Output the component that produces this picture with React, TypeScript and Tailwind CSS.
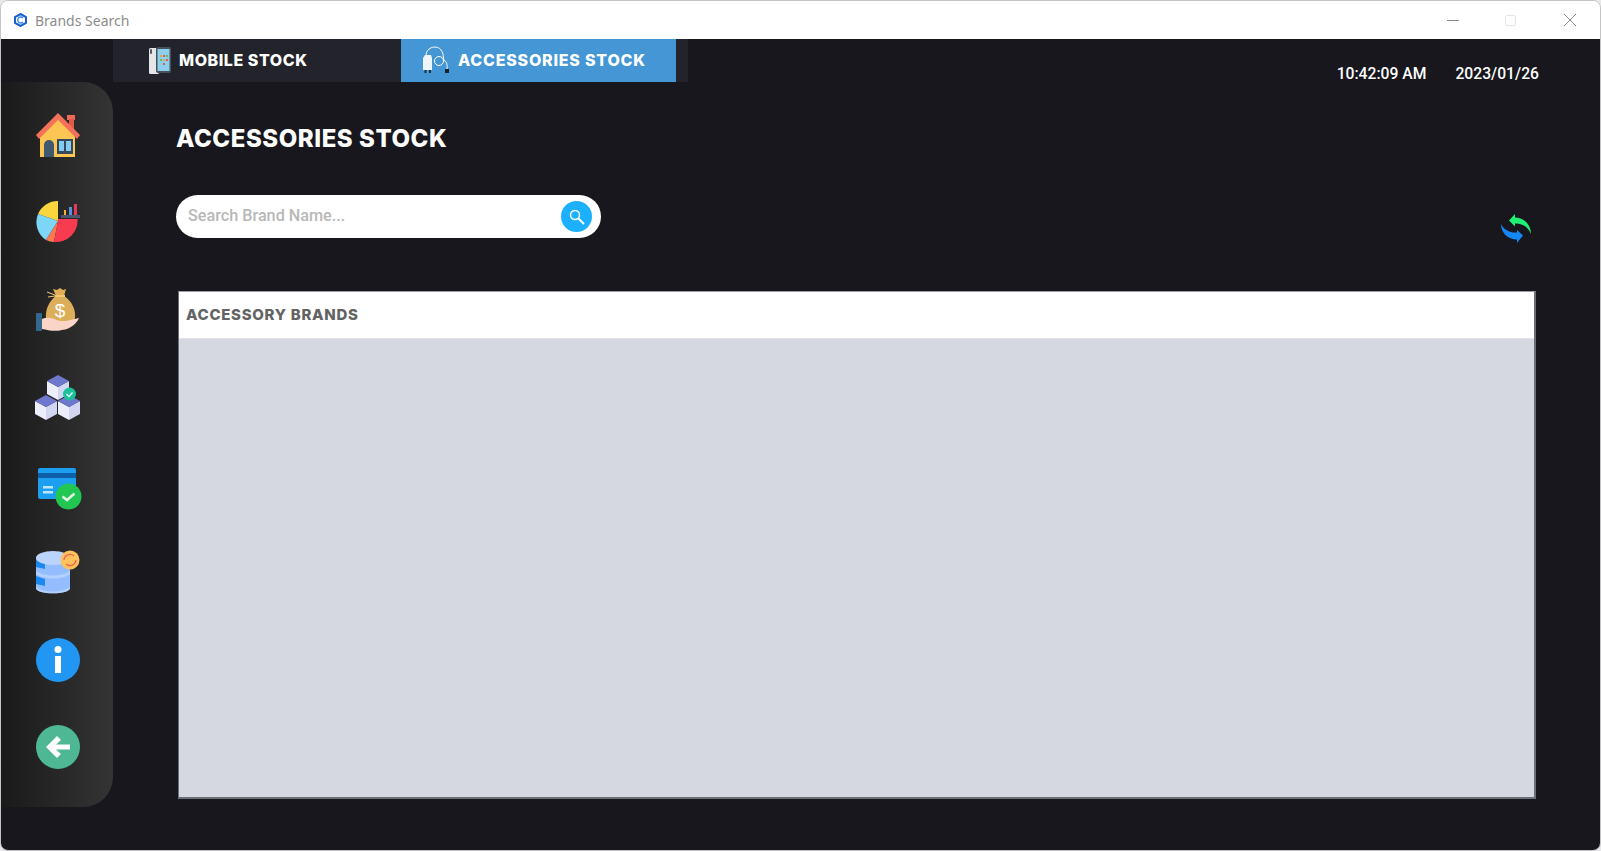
function HomeIcon() {
    return (
        <svg width="44" height="44" viewBox="0 0 44 44">
            <rect x="31" y="2" width="8" height="5" fill="#ee6a55" />
            <rect x="33" y="6" width="5" height="12" fill="#e0594a" />
            <path d="M4 20 L22 5 L39 20 V44 H4 Z" fill="#fdc652" />
            <path d="M0 22 L22 0 L44 22 L41 26 L22 7 L3 26 Z" fill="#f4715a" />
            <path d="M8 44 V32 a5 5 0 0 1 10 0 V44 Z" fill="#41596f" />
            <rect x="21" y="26" width="16" height="15" fill="#36495c" />
            <rect x="23" y="28" width="5" height="10" fill="#82ccf4" />
            <rect x="30" y="28" width="5" height="10" fill="#82ccf4" />
        </svg>
    );
}

function ChartIcon() {
    return (
        <svg width="44" height="44" viewBox="0 0 44 44">
            <path d="M22 1 V21 L2 14 A21.5 21.5 0 0 1 22 1 Z" fill="#fbd53d" />
            <path d="M22 21 L2 14 A21.5 21.5 0 0 0 10 40 Z" fill="#7dd5f8" />
            <path d="M22 21 L10 40 A21.5 21.5 0 0 0 18 42 Z" fill="#f87850" />
            <path d="M22 21 L18 42 A21.5 21.5 0 0 0 41.5 19 H22 Z" fill="#f93b52" />
            <rect x="25" y="15" width="19" height="3" fill="#4c5672" />
            <rect x="28" y="10" width="2" height="5" fill="#f3b435" />
            <rect x="33" y="7" width="3" height="8" fill="#5c8fe0" />
            <rect x="38" y="4" width="3" height="11" fill="#e63a5a" />
        </svg>
    );
}

function MoneyIcon() {
    return (
        <svg width="44" height="44" viewBox="0 0 44 44">
            <path d="M17 1 L21 2 L24 0 L27 2 L30 1 L28 8 H20 Z" fill="#dfae55" />
            <path d="M20 8 H28 C36 13 40 22 39 30 L36 36 H14 L10 30 C9 22 13 13 20 8 Z" fill="#dcae5a" />
            <rect x="19" y="7" width="10" height="2" fill="#f3c874" />
            <path d="M11 4 L19 7 M12 9 L19 8" stroke="#f3c874" strokeWidth="1" />
            <text x="24" y="29" textAnchor="middle" fontSize="19" fill="#fff" fontFamily="'Liberation Sans', sans-serif">$</text>
            <path d="M6 31 C12 28 18 31 24 33 H30 L43 30 C41 35 35 41 26 42 C18 44 12 42 6 41 Z" fill="#fad4c6" />
            <rect x="0" y="25" width="6" height="18" rx="1" fill="#33678c" />
        </svg>
    );
}

function Cube({ x, y }: { x: number; y: number }) {
    return (
        <g transform={`translate(${x} ${y})`}>
            <path d="M0 6 L11 12 V25 L0 19 Z" fill="#eceefb" />
            <path d="M22 6 L11 12 V25 L22 19 Z" fill="#d3d6f3" />
            <path d="M0 6 L11 0 L22 6 L11 12 Z" fill="#6f78cf" />
        </g>
    );
}

function BoxesIcon() {
    return (
        <svg width="45" height="45" viewBox="0 0 45 45">
            <Cube x={12} y={0} />
            <Cube x={0} y={20} />
            <Cube x={23} y={20} />
            <circle cx="34.5" cy="19" r="6.5" fill="#1cc09a" />
            <path d="M31.5 19 L34 21.5 L37.5 17.5" stroke="#e6fff8" strokeWidth="1.4" fill="none" />
        </svg>
    );
}

function CardIcon() {
    return (
        <svg width="44" height="42" viewBox="0 0 44 42">
            <rect x="0" y="0" width="38" height="31" rx="2" fill="#1c9ff0" />
            <rect x="0" y="5" width="38" height="5" fill="#0d5fa8" />
            <rect x="5" y="18" width="10" height="2.5" fill="#bde6fb" />
            <rect x="5" y="23" width="10" height="2.5" fill="#bde6fb" />
            <circle cx="30.5" cy="28.5" r="13" fill="#22c653" />
            <path d="M24.5 28.5 L29 32 L36.5 25.5" stroke="#dff8e6" strokeWidth="2.6" fill="none" />
        </svg>
    );
}

function DbIcon() {
    return (
        <svg width="44" height="44" viewBox="0 0 44 44">
            <path d="M0 7 H34 V38 C34 45 0 45 0 38 Z" fill="#94bdff" />
            <path d="M0 9 V17 L9 19 V12 Z M0 26 V34 L9 36 V29 Z" fill="#1b88f0" />
            <path d="M0 21 C8 27 26 27 34 21 V24 C26 30 8 30 0 24 Z" fill="#b4d0fd" />
            <path d="M0 37 C8 43 26 43 34 37 V38 C34 45 0 45 0 38 Z" fill="#b4d0fd" />
            <ellipse cx="17" cy="8" rx="17" ry="7" fill="#bcd4fc" />
            <circle cx="34" cy="10" r="9.5" fill="#fdc25c" />
            <path d="M28 10 A6 6 0 0 1 38 6 M40 10 A6 6 0 0 1 30 14" fill="none" stroke="#f2644f" strokeWidth="1.4" />
        </svg>
    );
}

function InfoIcon() {
    return (
        <svg width="44" height="44" viewBox="0 0 44 44">
            <circle cx="22" cy="22" r="22" fill="#2196f3" />
            <circle cx="22" cy="11.5" r="3.5" fill="#fff" />
            <rect x="19" y="18" width="6" height="17" fill="#fff" />
        </svg>
    );
}

function BackIcon() {
    return (
        <svg width="44" height="44" viewBox="0 0 44 44">
            <circle cx="22" cy="22" r="22" fill="#4db893" />
            <path d="M21 11 L10 22 L21 33 L25 29 L20 24.5 H34 V19.5 H20 L25 15 Z" fill="#fff" />
        </svg>
    );
}

function PhoneIcon() {
    return (
        <svg width="22" height="27" viewBox="0 0 22 27">
            <rect x="0" y="1" width="10" height="26" rx="1.5" fill="#e4e6e8" />
            <rect x="1" y="2" width="2" height="5" rx="1" fill="#55595e" />
            <rect x="7" y="0" width="15" height="26" rx="2" fill="#44505c" />
            <rect x="8.5" y="2" width="12" height="22" fill="#8dd0ee" />
            <rect x="11" y="8" width="2" height="2" fill="#e8a33c" />
            <rect x="14" y="8" width="2" height="2" fill="#e0584f" />
            <rect x="17" y="8" width="2" height="2" fill="#63b86a" />
            <rect x="11" y="12" width="2" height="2" fill="#63b86a" />
            <rect x="14" y="12" width="2" height="2" fill="#e8a33c" />
            <rect x="17" y="12" width="2" height="2" fill="#e0584f" />
            <rect x="14" y="16" width="2" height="2" fill="#e0584f" />
        </svg>
    );
}

function ChargerIcon() {
    return (
        <svg width="27" height="27" viewBox="0 0 27 27">
            <path d="M4 10 C4 0 16 -1 19 4 C22 8 21 12 22 14 C26 17 25 20 25 23" stroke="#fff" strokeWidth="1" fill="none" />
            <circle cx="17" cy="15" r="4.5" stroke="#fff" strokeWidth="1" fill="none" />
            <path d="M1 12 L3 9 H9 L10 12 V24 H1 Z" fill="#eef5fa" />
            <rect x="2.5" y="24" width="2" height="3" fill="#20303c" />
            <rect x="7" y="24" width="2" height="3" fill="#20303c" />
            <rect x="23" y="23" width="4" height="4" fill="#14222c" />
        </svg>
    );
}

function RefreshIcon() {
    return (
        <svg width="31" height="29" viewBox="0 0 31 29">
            <path d="M8 6.5 L14 0 V3.5 C23 3.5 30 11 30 20 C27 13 21 9 14 9.5 V12.5 Z" fill="#1fef73" />
            <path d="M0 10 C3 16 9 19 16 18.5 V16 L22 21.5 L16 29 V25.5 C7 25.5 0 19 0 10 Z" fill="#1486f5" />
        </svg>
    );
}

function App() {
    const menuIcons = [
        <HomeIcon />,
        <ChartIcon />,
        <MoneyIcon />,
        <BoxesIcon />,
        <div className="ml-[4px] mt-[8px]">
            <CardIcon />
        </div>,
        <DbIcon />,
        <InfoIcon />,
        <BackIcon />,
    ];

    return (
        <div className="w-[1601px] h-[851px] bg-[#e8e8e8] overflow-hidden">
            <div className="flex flex-col h-full overflow-hidden border border-[#c4c4c4] rounded-[8px] bg-white">
                {/* title bar */}
                <div className="flex items-center h-[38px] shrink-0 bg-white pl-[13px]">
                    <svg width="13" height="14" viewBox="0 0 13 14">
                        <path d="M6.5 1 L12 4 V10 L6.5 13 L1 10 V4 Z" fill="none" stroke="#1a5fd0" strokeWidth="2" />
                        <path d="M9 5 A3 3 0 1 0 9 9" fill="none" stroke="#3a86e8" strokeWidth="1.4" />
                    </svg>
                    <span className="ml-[8px] text-[14px] text-[#8c8c8c] font-['Noto_Sans',sans-serif]">Brands Search</span>
                    <div className="ml-auto flex items-center">
                        <div className="w-[12px] h-px bg-[#8a8a8a]"></div>
                        <div className="ml-[46px] w-[11px] h-[11px] border border-[#e6e6e6] rounded-[2px]"></div>
                        <svg className="ml-[48px] mr-[24px]" width="12" height="12" viewBox="0 0 12 12">
                            <path d="M0 0 L12 12 M12 0 L0 12" stroke="#8a8a8a" strokeWidth="1" />
                        </svg>
                    </div>
                </div>

                <div className="flex flex-1 bg-[#17171d]">
                    {/* sidebar */}
                    <div className="w-[112px] shrink-0 pt-[43px]">
                        <div className="h-[725px] pt-[9px] pl-[1px] rounded-r-[30px] bg-gradient-to-r from-[#1a1a1a] to-[#343434]">
                            {menuIcons.map((icon, i) => (
                                <div key={i} className="flex items-center justify-center h-[87.5px]">
                                    {icon}
                                </div>
                            ))}
                        </div>
                    </div>

                    <div className="flex-1 min-w-0">
                        {/* tabs */}
                        <div className="flex items-start h-[43px]">
                            <div className="flex w-[575px] h-full bg-[#23232b] text-white font-['Inter',sans-serif] font-extrabold text-[16px]">
                                <div className="flex items-center w-[288px] pl-[36px] pb-[1px] tracking-[0.55px]">
                                    <PhoneIcon />
                                    <span className="ml-[8px]">MOBILE STOCK</span>
                                </div>
                                <div className="flex items-center w-[275px] pb-[2px] pl-[21px] bg-[#4496d4] tracking-[0.78px]">
                                    <ChargerIcon />
                                    <span className="ml-[9px]">ACCESSORIES STOCK</span>
                                </div>
                            </div>
                            <div className="flex ml-auto mr-[61px] mt-[25px] gap-[29px] text-white text-[15.7px] leading-[20px] font-medium font-['Roboto',sans-serif]">
                                <span>10:42:09 AM</span>
                                <span>2023/01/26</span>
                            </div>
                        </div>

                        <div className="pl-[63px]">
                            <h1 className="mt-[41px] text-[24px] leading-[32px] tracking-[0.55px] font-extrabold text-white font-['Inter',sans-serif]">
                                ACCESSORIES STOCK
                            </h1>

                            {/* search row */}
                            <div className="flex items-start mt-[40px]">
                                <div className="flex items-center w-[425px] h-[43px] pl-[12px] pr-[9px] bg-white rounded-full">
                                    <input
                                        className="flex-1 outline-none text-[16.2px] font-medium font-['Roboto',sans-serif] placeholder:text-[#b8b8b8]"
                                        placeholder="Search Brand Name..."
                                    />
                                    <div className="flex items-center justify-center w-[31px] h-[31px] rounded-full bg-[#1cb0ff]">
                                        <svg width="18" height="18" viewBox="0 0 18 18">
                                            <circle cx="7" cy="7" r="4.5" fill="none" stroke="#fff" strokeWidth="1.5" />
                                            <path d="M10.5 10.5 L16 16" stroke="#fff" strokeWidth="1.8" />
                                        </svg>
                                    </div>
                                </div>
                                <div className="ml-auto mr-[68px] mt-[19px]">
                                    <RefreshIcon />
                                </div>
                            </div>

                            {/* brands table */}
                            <div className="flex flex-col w-[1358px] h-[508px] ml-[2px] mt-[48px] border-2 border-t border-l border-[#6b7077] border-t-[#9a9da3] bg-[#d5d8e1]">
                                <div className="flex items-center h-[47px] pl-[7px] pt-[1px] bg-white border-b border-[#e4e4e8] text-[15px] tracking-[0.7px] font-extrabold text-[#636363] font-['Inter',sans-serif]">
                                    ACCESSORY BRANDS
                                </div>
                            </div>
                        </div>
                    </div>
                </div>
            </div>
        </div>
    );
}

export default App;
